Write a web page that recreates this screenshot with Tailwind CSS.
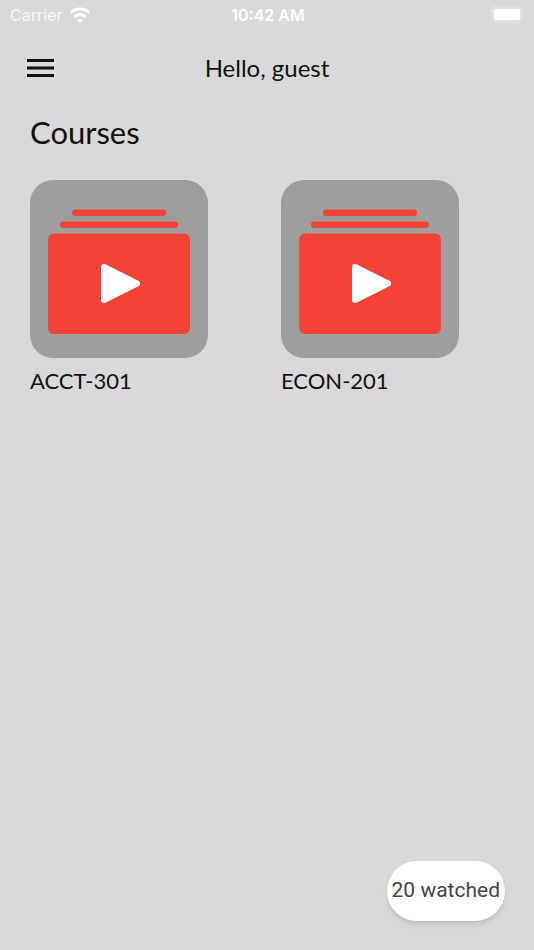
<!DOCTYPE html>
<html lang="en">
<head>
  <meta charset="UTF-8" />
  <title>Courses</title>
  <meta name="viewport" content="width=device-width, initial-scale=1.0" />
  <script src="https://cdn.jsdelivr.net/npm/@tailwindcss/browser@4"></script>
</head>
<body class="bg-[#d9d9d9] text-[#111111] min-h-screen flex flex-col font-[Lato,sans-serif]">

  <!-- Status bar -->
  <div class="grid grid-cols-3 items-center h-[30px] pl-[10px] pr-2 text-white font-[Inter,sans-serif]">
    <div class="flex items-center gap-2">
      <span class="text-[16px] leading-5 text-white/80">Carrier</span>
      <svg class="w-5 h-4" viewBox="0 0 20 16" fill="none" stroke="white" stroke-width="3" aria-hidden="true">
        <path d="M1 5.6a13.2 13.2 0 0 1 18 0" />
        <path d="M4.4 9.8a8.2 8.2 0 0 1 11.2 0" />
        <path d="M10 15.8 7.200 13a4.200 4.200 0 0 1 5.600 0z" fill="white" stroke="none" />
      </svg>
    </div>
    <span class="text-center text-[16px] leading-5 font-semibold">10:42 AM</span>
    <svg class="justify-self-end w-9 h-[18px]" viewBox="0 0 36 18" aria-hidden="true">
      <rect x="1" y="0" width="32" height="17" rx="5" fill="#e1e1e1" />
      <rect x="4" y="3" width="26" height="11" rx="2" fill="white" />
      <path d="M34 6q3 2.500 0 5z" fill="#e1e1e1" />
    </svg>
  </div>

  <!-- Header -->
  <header class="grid grid-cols-[1fr_auto_1fr] items-center h-[76px] px-[27px]">
    <button type="button" aria-label="Open menu" class="justify-self-start">
      <svg class="block w-[27px] h-[18px]" viewBox="0 0 27 18" fill="#111111" aria-hidden="true">
        <path d="M0 0h27v3H0zM0 7.500h27v3H0zM0 15h27v3H0z" />
      </svg>
    </button>
    <h1 class="text-[24px] leading-7">Hello, guest</h1>
  </header>

  <main class="grow pl-[30px] pr-0.5">
    <h2 class="text-[31px] leading-[52px]">Courses</h2>

    <div class="grid grid-cols-2 pt-[22px]">
      <a href="#acct-301" class="block">
        <svg class="block w-[178px] h-[178px]" viewBox="0 0 178 178" aria-hidden="true">
          <rect width="178" height="178" rx="23" fill="#9e9e9e" />
          <g fill="#f44336">
            <rect x="42" y="29.5" width="94" height="6.5" rx="3" />
            <rect x="30" y="41.5" width="118" height="6.5" rx="3" />
            <rect x="18" y="53.5" width="142" height="100.5" rx="6" />
          </g>
          <path d="M74 87v33l33-16.5z" fill="white" stroke="white" stroke-width="6" stroke-linejoin="round" />
        </svg>
        <span class="block pt-2 text-[22px] leading-[30px]">ACCT-301</span>
      </a>
      <a href="#econ-201" class="block">
        <svg class="block w-[178px] h-[178px]" viewBox="0 0 178 178" aria-hidden="true">
          <rect width="178" height="178" rx="23" fill="#9e9e9e" />
          <g fill="#f44336">
            <rect x="42" y="29.5" width="94" height="6.5" rx="3" />
            <rect x="30" y="41.5" width="118" height="6.5" rx="3" />
            <rect x="18" y="53.5" width="142" height="100.5" rx="6" />
          </g>
          <path d="M74 87v33l33-16.5z" fill="white" stroke="white" stroke-width="6" stroke-linejoin="round" />
        </svg>
        <span class="block pt-2 text-[22px] leading-[30px]">ECON-201</span>
      </a>
    </div>
  </main>

  <!-- Watched counter -->
  <div class="flex justify-end pr-[29px] pb-[29px]">
    <button type="button" class="h-[60px] px-[5px] rounded-full bg-white text-[#444444] text-[21px] font-[Roboto,sans-serif] shadow-md">20 watched</button>
  </div>

</body>
</html>
